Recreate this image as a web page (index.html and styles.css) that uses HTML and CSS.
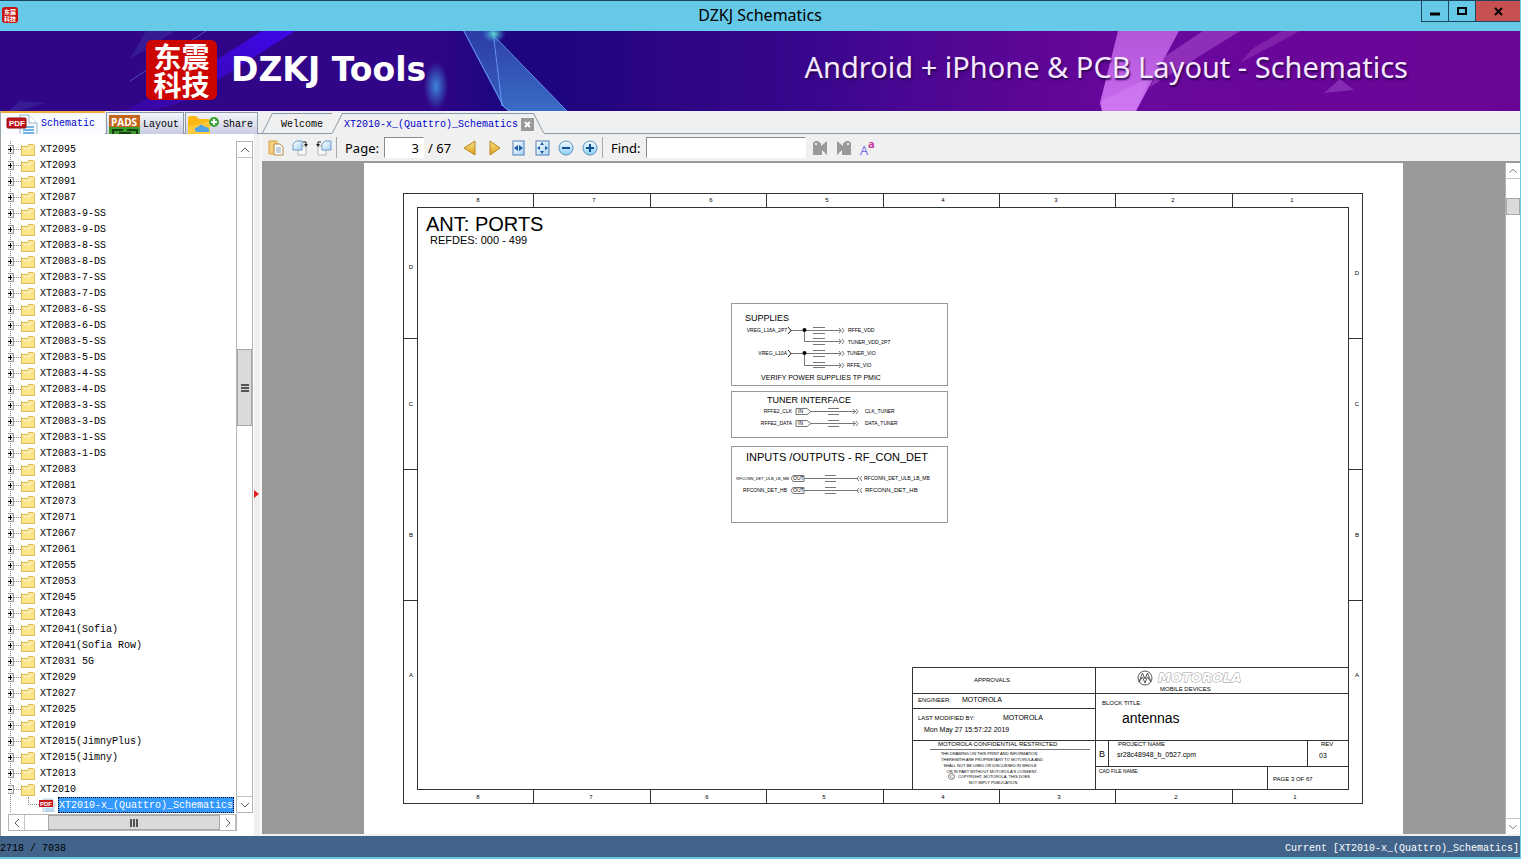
FILE: index.html
```html
<!DOCTYPE html>
<html lang="en">
<head>
	<meta charset="UTF-8">
	<title>DZKJ Schematics</title>
	<link rel="stylesheet" href="styles.css">
</head>
<body>
	<svg class="defs" aria-hidden="true">
		<symbol id="folder" viewBox="0 0 14 13">
			<path d="M.5 2.500 V12.500 H13.500 V2.500 L12.500 1.500 H7.500 L6 3.500 H1.500 L.5 2.500 Z" fill="#fbe58c" stroke="#dfb955"/>
			<path d="M2 5.500 H9 L10 3.500 H12.500" fill="none" stroke="#fff6c8"/>
		</symbol>
		<symbol id="pdf" viewBox="0 0 32 22">
			<path d="M14 2 H23 L31 10 V22 H14 Z" fill="#f2f8fd" stroke="#9fb8cc"/>
			<path d="M23 2 V10 H31" fill="#fff" stroke="#9fb8cc"/>
			<path d="M17 14 H28 M17 17 H28 M17 20 H28" stroke="#72b4e4" stroke-width="2"/>
			<rect x="1" y="5" width="19" height="10" rx="1" fill="#c5161c" stroke="#8e0c10"/>
			<text x="3" y="13" font-family="Liberation Sans" font-weight="bold" font-size="8" fill="#fff">PDF</text>
		</symbol>
		<symbol id="pdf-small" viewBox="0 0 16 14">
			<path d="M4 1 H13 L15 4 V14 H4 Z" fill="#e4f1fb" stroke="#b4cbdd"/>
			<path d="M6 11 H14 M6 13 H14" stroke="#8fc4ea"/>
			<rect y="2" width="14" height="7" fill="#c5161c"/>
			<text x="1" y="8" font-family="Liberation Sans" font-weight="bold" font-size="6" fill="#fff">PDF</text>
		</symbol>
		<symbol id="up" viewBox="0 0 16 16"><path d="M4 10 L8 6 L12 10" fill="none" stroke="#606060"/></symbol>
		<symbol id="down" viewBox="0 0 16 16"><path d="M4 6 L8 10 L12 6" fill="none" stroke="#606060"/></symbol>
		<symbol id="left" viewBox="0 0 16 16"><path d="M10 4 L6 8 L10 12" fill="none" stroke="#606060"/></symbol>
		<symbol id="right" viewBox="0 0 16 16"><path d="M6 4 L10 8 L6 12" fill="none" stroke="#606060"/></symbol>
		<linearGradient id="gold" x2="0" y2="1"><stop offset="0" stop-color="#fbe58a"/><stop offset="1" stop-color="#dd9c18"/></linearGradient>
		<linearGradient id="sky" x2="0" y2="1"><stop offset="0" stop-color="#f2fbff"/><stop offset="1" stop-color="#8bcdf4"/></linearGradient>
		<linearGradient id="paper" x2="1" y2="1"><stop offset="0" stop-color="#ffffff"/><stop offset="1" stop-color="#a8d4f4"/></linearGradient>
	</svg>

	<header class="titlebar">
		<span class="app-icon">东震<br>科技</span>
		<h1>DZKJ Schematics</h1>
		<div class="win-buttons">
			<button type="button" aria-label="Minimize"><svg width="10" height="9"><path d="M0 7 H10" stroke="#000" stroke-width="3"/></svg></button>
			<button type="button" aria-label="Maximize"><svg width="10" height="9"><rect x="1" y="1" width="8" height="6" fill="none" stroke="#000" stroke-width="2"/></svg></button>
			<button type="button" class="close" aria-label="Close"><svg width="9" height="9"><path d="M1 1 L8 8 M8 1 L1 8" stroke="#000" stroke-width="2"/></svg></button>
		</div>
	</header>

	<div class="banner">
		<svg class="banner-art" viewBox="0 0 1520 80" preserveAspectRatio="none" aria-hidden="true">
			<defs>
				<linearGradient id="bg">
					<stop offset="0" stop-color="#310587"/><stop offset=".28" stop-color="#310587"/>
					<stop offset=".33" stop-color="#1d0580"/><stop offset=".37" stop-color="#1f047f"/>
					<stop offset=".43" stop-color="#2b0583"/><stop offset=".53" stop-color="#37068c"/>
					<stop offset=".6" stop-color="#4b0793"/><stop offset=".68" stop-color="#5d0596"/>
					<stop offset=".74" stop-color="#6a079d"/><stop offset="1" stop-color="#690596"/>
				</linearGradient>
				<linearGradient id="streak" x1="1" x2="0" y2="1"><stop offset="0" stop-color="#3d08e8"/><stop offset="1" stop-color="#3806a0"/></linearGradient>
				<linearGradient id="facet" x2="0" y2="1"><stop offset="0" stop-color="#2f48b0"/><stop offset="1" stop-color="#3d78cc"/></linearGradient>
				<linearGradient id="pink" x2="0" y2="1"><stop offset="0" stop-color="#b455d8"/><stop offset="1" stop-color="#c86cf0"/></linearGradient>
				<radialGradient id="glow"><stop offset="0" stop-color="#3c86d8"/><stop offset="1" stop-color="#3c86d8" stop-opacity="0"/></radialGradient>
				<radialGradient id="spark"><stop offset="0" stop-color="#5fe0d0"/><stop offset="1" stop-color="#3c86d8" stop-opacity="0"/></radialGradient>
			</defs>
			<rect width="1520" height="80" fill="url(#bg)"/>
			<path d="M262 0 H295 L185 70 L150 80 H125 L218 28 Z" fill="url(#streak)"/>
			<path d="M146 0 H175 L130 28 Z M20 70 L45 72 L20 80 H8 Z" fill="#3f3ca8" opacity=".4"/>
			<path d="M206 0 L130 50" stroke="#5148c0"/>
			<ellipse cx="436" cy="55" rx="12" ry="24" fill="url(#glow)"/>
			<path d="M463 0 H493 L503 76 Z" fill="url(#facet)" opacity=".8"/>
			<path d="M494 5 L567 80 H508 L502 74 Z" fill="url(#facet)" opacity=".9"/>
			<path d="M464 0 L504 76 L510 80 M493 0 L502 75 M494 5 L567 80" fill="none" stroke="#6d9bff" opacity=".9"/>
			<ellipse cx="494" cy="3" rx="12" ry="9" fill="url(#spark)"/>
			<path d="M1118 0 H1179 L1136 80 H1102 L1100 72 Z" fill="url(#pink)"/>
			<path d="M1102 70 L1150 46 L1136 80 H1102 Z" fill="#d78af8" opacity=".4"/>
			<path d="M1203 0 H1240 L1150 56 L1164 26 Z" fill="#a040c4" opacity=".7"/>
			<path d="M1282 0 H1300 L1240 32 L1252 18 Z" fill="#8c2cb0" opacity=".7"/>
			<path d="M1340 48 L1354 59 L1324 62 Z" fill="#8b35b8" opacity=".8"/>
		</svg>
		<div class="banner-text">
			<div class="logo"><span>东震</span><span>科技</span></div>
			<strong>DZKJ Tools</strong>
			<span class="slogan">Android + iPhone &amp; PCB Layout - Schematics</span>
		</div>
	</div>

	<main>
		<aside>
			<nav class="side-tabs">
				<button type="button" class="active"><svg width="32" height="22"><use href="#pdf"/></svg>Schematic</button>
				<button type="button">
					<svg width="31" height="19"><rect width="31" height="19" fill="#c4651c"/><rect y="12" width="31" height="7" fill="#3a9a2c"/><path d="M4 19 V15 H14 M18 15 H28 V19 M10 18 H22" fill="none" stroke="#173f14" stroke-width="2"/><text x="2" y="11" font-family="Open Sans" font-weight="bold" font-size="10" fill="#fff">PADS</text></svg>Layout
				</button>
				<button type="button">
					<svg width="32" height="19"><path d="M0 3 Q0 1 2 1 H8 L11 4 H20 Q22 4 22 6 V19 H0 Z" fill="#fdb913"/><path d="M0 12 L22 6 V19 H0 Z" fill="#ffc93c"/><path d="M10 17 Q6 17 7 13 Q9 12 10 12 Q13 7 17 12 Q22 12 21 17 Z" fill="#4da5e8"/><circle cx="26" cy="7" r="5" fill="#3fa535"/><path d="M26 4 V10 M23 7 H29" stroke="#fff" stroke-width="2"/></svg>Share
				</button>
			</nav>
			<div class="side-body">
				<div class="tree-wrap">
					<ul class="tree" id="tree"></ul>
					<div class="vscroll">
						<button type="button" aria-label="Scroll up"><svg width="16" height="16"><use href="#up"/></svg></button>
						<div class="track"><div class="thumb side-thumb"><svg width="8" height="8"><path d="M0 1 H8 M0 4 H8 M0 7 H8" stroke="#555" stroke-width="2"/></svg></div></div>
						<button type="button" aria-label="Scroll down"><svg width="16" height="16"><use href="#down"/></svg></button>
					</div>
				</div>
				<div class="hscroll">
					<button type="button" aria-label="Scroll left"><svg width="16" height="16"><use href="#left"/></svg></button>
					<div class="track"><div class="thumb"><svg width="8" height="8"><path d="M1 0 V8 M4 0 V8 M7 0 V8" stroke="#555" stroke-width="2"/></svg></div></div>
					<button type="button" aria-label="Scroll right"><svg width="16" height="16"><use href="#right"/></svg></button>
				</div>
			</div>
			<div class="splitter"><svg width="5" height="8"><path d="M0 0 L5 4 L0 8 Z" fill="#e02020"/></svg></div>
		</aside>

		<section class="viewer">
			<nav class="doc-tabs">
				<button type="button" class="doc-tab welcome">Welcome</button>
				<button type="button" class="doc-tab active">XT2010-x_(Quattro)_Schematics
					<svg width="13" height="13"><rect width="13" height="13" fill="#9a9a9a"/><path d="M4 4 L9 9 M9 4 L4 9" stroke="#fff" stroke-width="2"/></svg>
				</button>
				<span class="tab-rest"></span>
			</nav>
			<div class="toolbar">
				<button type="button" aria-label="Open"><svg width="16" height="16"><path d="M1 1 H9 V14 H1 Z" fill="#f3cf82" stroke="#d9a441"/><path d="M6 4 H12 L15 7 V15 H6 Z" fill="#f9fbfd" stroke="#b98a3a"/><path d="M8 8 H13 M8 10 H13 M8 12 H13" stroke="#8ea6bd"/></svg></button>
				<button type="button" aria-label="Rotate right"><svg width="16" height="16"><path d="M6 6 H14 V15 H6 Z" fill="#f6f6f6" stroke="#b5b5b5"/><path d="M1 4 L4 1 H10 V10 H1 Z" fill="url(#paper)" stroke="#6f9cc8"/><path d="M11 2 H14 V5" fill="none" stroke="#222"/><path d="M12 4 H16 L14 7 Z" fill="#222"/></svg></button>
				<button type="button" aria-label="Rotate left"><svg width="16" height="16"><path d="M2 6 H10 V15 H2 Z" fill="#f6f6f6" stroke="#b5b5b5"/><path d="M6 4 L9 1 H15 V10 H6 Z" fill="url(#paper)" stroke="#6f9cc8"/><path d="M5 2 H2 V5" fill="none" stroke="#222"/><path d="M0 4 H4 L2 7 Z" fill="#222"/></svg></button>
				<span class="sep"></span>
				<label for="page">Page:</label>
				<input class="page-input" id="page" type="text" value="3">
				<span class="total">/ 67</span>
				<button type="button" aria-label="Previous page"><svg width="16" height="16"><path d="M2 8 L13 1 V15 Z" fill="url(#gold)" stroke="#b58820"/></svg></button>
				<button type="button" aria-label="Next page"><svg width="16" height="16"><path d="M4 1 V15 L14 8 Z" fill="url(#gold)" stroke="#b58820"/></svg></button>
				<button type="button" aria-label="Fit width"><svg width="16" height="16"><rect x="3" y="1" width="11" height="14" fill="url(#paper)" stroke="#4f7fb5"/><path d="M4 8 L8 5 V11 Z M13 8 L9 5 V11 Z" fill="#1c5aa6"/></svg></button>
				<button type="button" aria-label="Fit page"><svg width="16" height="16"><rect x="2" y="1" width="13" height="14" fill="url(#paper)" stroke="#4f7fb5"/><path d="M8 2 L10 5 H6 Z M8 14 L10 11 H6 Z M3 8 L6 6 V10 Z M14 8 L11 6 V10 Z" fill="#1c5aa6"/></svg></button>
				<button type="button" aria-label="Zoom out"><svg width="16" height="16"><circle cx="8" cy="8" r="7" fill="url(#sky)" stroke="#5b93bf"/><path d="M4 8 H12" stroke="#104e96" stroke-width="2"/></svg></button>
				<button type="button" aria-label="Zoom in"><svg width="16" height="16"><circle cx="8" cy="8" r="7" fill="url(#sky)" stroke="#5b93bf"/><path d="M4 8 H12 M8 4 V12" stroke="#104e96" stroke-width="2"/></svg></button>
				<span class="sep"></span>
				<label for="find">Find:</label>
				<input class="find-input" id="find" type="text">
				<button type="button" aria-label="Find previous"><svg width="16" height="16"><path d="M1 3 L3 1 H6 L8 3 H9 V6 L15 1 V15 L10 10 V15 H1 Z" fill="#999"/><path d="M3 4 H5" stroke="#eee" stroke-width="2"/></svg></button>
				<button type="button" aria-label="Find next"><svg width="16" height="16"><path d="M15 3 L13 1 H10 L8 3 H7 V6 L1 1 V15 L6 10 V15 H15 Z" fill="#999"/><path d="M11 4 H13" stroke="#eee" stroke-width="2"/></svg></button>
				<button type="button" aria-label="Match case"><svg class="case" width="18" height="20"><text x="1" y="17" font-family="Open Sans" font-size="13" fill="#7a68e8">A</text><text x="9" y="10" font-family="Open Sans" font-size="11" font-weight="bold" fill="#c8329a">a</text></svg></button>
			</div>

			<div class="canvas">
				<div class="page-area">
					<svg class="sheet" viewBox="364 163 1039 671" role="img" aria-label="Antenna ports, page 3">
						<rect x="364" y="163" width="1039" height="671" fill="#fff"/>
						<!-- frame -->
						<g class="frame">
							<rect x="403.500" y="193.500" width="959" height="610"/>
							<rect x="417.500" y="207.500" width="931" height="582"/>
							<path d="M533.500 193 V208 M650.500 193 V208 M766.500 193 V208 M883.500 193 V208 M999.500 193 V208 M1115.500 193 V208 M1232.500 193 V208"/>
							<path d="M533.500 790 V804 M650.500 790 V804 M766.500 790 V804 M883.500 790 V804 M999.500 790 V804 M1115.500 790 V804 M1232.500 790 V804"/>
							<path d="M403 338.500 H418 M403 469.500 H418 M403 600.500 H418 M1349 338.500 H1363 M1349 469.500 H1363 M1349 600.500 H1363"/>
						</g>
						<g class="t6 mid">
							<text x="478" y="202">8</text><text x="594" y="202">7</text><text x="711" y="202">6</text><text x="827" y="202">5</text><text x="943" y="202">4</text><text x="1056" y="202">3</text><text x="1173" y="202">2</text><text x="1292" y="202">1</text>
							<text x="478" y="799">8</text><text x="591" y="799">7</text><text x="707" y="799">6</text><text x="824" y="799">5</text><text x="943" y="799">4</text><text x="1059" y="799">3</text><text x="1176" y="799">2</text><text x="1295" y="799">1</text>
							<text x="411" y="269">D</text><text x="411" y="406">C</text><text x="411" y="537">B</text><text x="411" y="677">A</text>
							<text x="1357" y="275">D</text><text x="1357" y="406">C</text><text x="1357" y="537">B</text><text x="1357" y="677">A</text>
						</g>
						<text x="426" y="231" class="t20">ANT: PORTS</text>
						<text x="430" y="244" class="t11">REFDES: 000 - 499</text>

						<!-- supplies -->
						<g class="box"><rect x="731.500" y="303.500" width="216" height="82"/><rect x="731.500" y="391.500" width="216" height="46"/><rect x="731.500" y="446.500" width="216" height="76"/></g>
						<text x="745" y="321" class="t9">SUPPLIES</text>
						<g class="wire">
							<path d="M790 330.500 H841 M804.500 330 V341.500 H841 M790 353.500 H841 M804.500 353 V365.500 H841"/>
							<path d="M813 327.500 H825 M813 333.500 H825 M813 338.500 H825 M813 344.500 H825 M813 350.500 H825 M813 356.500 H825 M813 362.500 H825 M813 367.500 H825"/>
							<path d="M839 328 L841 330.500 L839 333 M842 328 L844 330.500 L842 333 M839 339 L841 341.500 L839 344 M842 339 L844 341.500 L842 344 M839 351 L841 353.500 L839 356 M842 351 L844 353.500 L842 356 M839 363 L841 365.500 L839 368 M842 363 L844 365.500 L842 368"/>
						</g>
						<path class="port" d="M788 327 L791 330.500 L788 334 M788 350 L791 353.500 L788 357"/>
						<circle cx="804.500" cy="330" r="2"/><circle cx="804.500" cy="353" r="2"/>
						<g class="t5">
							<text x="787" y="332" class="end">VREG_L16A_2P7</text><text x="787" y="355" class="end">VREG_L10A</text>
							<text x="848" y="332">RFFE_VDD</text><text x="848" y="344">TUNER_VDD_2P7</text><text x="847" y="355">TUNER_VIO</text><text x="847" y="367">RFFE_VIO</text>
						</g>
						<text x="821" y="380" class="t7 mid">VERIFY POWER SUPPLIES TP PMIC</text>

						<!-- tuner -->
						<text x="767" y="403" class="t9">TUNER INTERFACE</text>
						<g class="wire">
							<path d="M796 408.500 H807 L811 411.500 L807 414.500 H796 Z M796 420.500 H807 L811 423.500 L807 426.500 H796 Z"/>
							<path d="M811 411.500 H856 M811 423.500 H856 M828 408.500 H839 M828 414.500 H839 M828 420.500 H839 M828 426.500 H839"/>
							<path d="M853 409 L855 411.500 L853 414 M856 409 L858 411.500 L856 414 M853 421 L855 423.500 L853 426 M856 421 L858 423.500 L856 426"/>
						</g>
						<g class="t5">
							<text x="792" y="413" class="end">RFFE2_CLK</text><text x="792" y="425" class="end">RFFE2_DATA</text>
							<text x="798" y="413">IN</text><text x="798" y="425">IN</text>
							<text x="865" y="413">CLK_TUNER</text><text x="865" y="425">DATA_TUNER</text>
						</g>

						<!-- inputs / outputs -->
						<text x="837" y="461" class="t11 mid">INPUTS /OUTPUTS - RF_CON_DET</text>
						<g class="wire">
							<path d="M804 475.500 H793 L791 478.500 L793 481.500 H804 Z M804 487.500 H793 L791 490.500 L793 493.500 H804 Z"/>
							<path d="M804 478.500 H858 M804 490.500 H858 M825 475.500 H836 M825 481.500 H836 M825 487.500 H836 M825 493.500 H836"/>
							<path d="M859 476 L857 478.500 L859 481 M862 476 L860 478.500 L862 481 M859 488 L857 490.500 L859 493 M862 488 L860 490.500 L862 493"/>
						</g>
						<g class="t4"><text x="789" y="480" class="end">RFCONN_DET_ULB_LB_MB</text></g>
						<g class="t5">
							<text x="787" y="492" class="end">RFCONN_DET_HB</text>
							<text x="793" y="480">OUT</text><text x="793" y="492">OUT</text>
							<text x="864" y="480">RFCONN_DET_ULB_LB_MB</text>
						</g>
						<text x="865" y="492" class="t6">RFCONN_DET_HB</text>

						<!-- title block -->
						<g class="frame">
							<path d="M912.500 790 V667.500 H1348 M912 693.500 H1348 M912 708.500 H1095 M912 740.500 H1348 M1095.500 667 V790 M1095 766.500 H1348 M1108.500 740 V766 M1307.500 740 V766 M1267.500 766 V790"/>
						</g>
						<path class="wire" d="M930 749.500 H1090"/>
						<g class="t6">
							<text x="974" y="682">APPROVALS</text>
							<text x="918" y="702">ENGINEER:</text>
							<text x="918" y="720">LAST MODIFIED BY:</text>
							<text x="938" y="746">MOTOROLA CONFIDENTIAL RESTRICTED</text>
							<text x="1160" y="691">MOBILE DEVICES</text>
							<text x="1102" y="705">BLOCK TITLE:</text>
							<text x="1118" y="746">PROJECT NAME</text>
							<text x="1321" y="746">REV</text>
							<text x="1273" y="781">PAGE 3 OF 67</text>
						</g>
						<g class="t7">
							<text x="962" y="702">MOTOROLA</text>
							<text x="1003" y="720">MOTOROLA</text>
							<text x="924" y="732">Mon May 27 15:57:22 2019</text>
							<text x="1117" y="757">sr28c48948_b_0527.cpm</text>
							<text x="1319" y="758">03</text>
						</g>
						<text x="1099" y="757" class="t9">B</text>
						<text x="1099" y="773" class="t5">CAD FILE NAME:</text>
						<text x="1122" y="723" class="t14">antennas</text>
						<g class="t4 mid">
							<text x="989" y="755">THE DRAWING ON THIS PRINT AND INFORMATION</text>
							<text x="992" y="761">THEREWITH ARE PROPRIETARY TO MOTOROLA AND</text>
							<text x="990" y="767">SHALL NOT BE USED OR DISCUSSED IN WHOLE</text>
							<text x="992" y="773">OR IN PART WITHOUT MOTOROLA'S CONSENT.</text>
							<text x="994" y="778">COPYRIGHT, MOTOROLA. THIS DOES</text>
							<text x="993" y="784">NOT IMPLY PUBLICATION</text>
						</g>
						<circle cx="951.500" cy="776.500" r="3" class="wire"/><text x="950" y="778" class="t4">C</text>
						<circle cx="1145" cy="678" r="7" class="ring"/>
						<path d="M1139 682 L1142.500 673 L1145 679 L1147.500 673 L1151 682 L1147.500 677 L1145 683 L1142.500 677 Z" class="ring"/>
						<text x="1158" y="682" class="brand">MOTOROLA</text>
					</svg>
				</div>
				<div class="vscroll">
					<button type="button" aria-label="Page up"><svg width="14" height="14"><use href="#up"/></svg></button>
					<div class="track"><div class="thumb page-thumb"></div></div>
					<button type="button" aria-label="Page down"><svg width="14" height="14"><use href="#down"/></svg></button>
				</div>
			</div>
		</section>
	</main>

	<footer>
		<span>2718 / 7038</span>
		<span class="current">Current [XT2010-x_(Quattro)_Schematics]</span>
	</footer>
	<script src="tree.js"></script>
</body>
</html>
```
FILE: styles.css
```css
* {
	box-sizing: border-box;
}

body {
	margin: 0;
	height: 100vh;
	display: flex;
	flex-direction: column;
	overflow: hidden;
	background: #f0f0f0;
	border-right: 1px solid #66c9e8;
	border-bottom: 2px solid #66c9e8;
	font-family: "Liberation Mono", "Noto Sans CJK SC", monospace;
	font-size: 10px;
	color: #000;
}

button {
	margin: 0;
	padding: 0;
	border: none;
	background: none;
	font: inherit;
	color: inherit;
}

svg {
	display: block;
	flex: none;
}

.defs {
	position: absolute;
	width: 0;
	height: 0;
}

/* title bar */
.titlebar {
	display: grid;
	grid-template-columns: 1fr auto 1fr;
	height: 31px;
	flex: none;
	border-top: 1px solid #1d4560;
	background: #66c9e8;
}

.app-icon {
	width: 16px;
	height: 16px;
	margin: 6px 2px;
	padding-top: 1px;
	border-radius: 3px;
	background: #c8100c;
	color: #fff;
	font: bold 6px/7px "Noto Sans CJK SC", sans-serif;
	text-align: center;
}

.titlebar h1 {
	margin: 0;
	font: 16px/29px "Noto Sans", sans-serif;
}

.win-buttons {
	display: flex;
	justify-content: flex-end;
	height: 21px;
}

.win-buttons button {
	display: flex;
	align-items: center;
	justify-content: center;
	width: 27px;
	border: 1px solid #1d4560;
	border-width: 0 0 1px 1px;
}

.win-buttons .close {
	width: 45px;
	background: #c75050;
}

/* banner */
.banner {
	display: grid;
	height: 80px;
	flex: none;
}

.banner-art, .banner-text {
	grid-area: 1 / 1;
	width: 100%;
	height: 80px;
}

.banner-text {
	display: flex;
	align-items: center;
	padding: 0 112px 2px 146px;
	z-index: 1;
	color: #fff;
}

.logo {
	display: flex;
	flex-direction: column;
	align-items: center;
	justify-content: center;
	width: 71px;
	height: 60px;
	border-radius: 6px;
	background: #cd0500;
	font: bold 28px/28px "Noto Sans CJK SC", sans-serif;
}

.banner strong {
	margin-left: 14px;
	font: bold 33px/40px "DejaVu Sans", sans-serif;
}

.slogan {
	margin: 0 0 6px auto;
	font: 29px/40px "Noto Sans", sans-serif;
	color: #f6e8ff;
	text-shadow: 1px 2px 2px #2a0450;
	white-space: nowrap;
}

/* main */
main {
	display: flex;
	flex: 1;
	min-height: 0;
}

aside {
	display: grid;
	grid-template: 23px 1fr / 253px 8px;
	flex: none;
	border-left: 1px solid #9aa5ad;
}

.side-tabs {
	grid-column: 1 / 3;
	display: flex;
	gap: 1px;
	border-bottom: 1px solid #8a9aa8;
}

.side-tabs button {
	display: flex;
	align-items: center;
	gap: 3px;
	height: 22px;
	margin-top: 1px;
	padding: 2px 4px 0 2px;
	border: 1px solid #8a9aa8;
	border-bottom: none;
	background: linear-gradient(#f4f5fa, #c9cde2);
}

.side-tabs .active {
	width: 104px;
	height: 23px;
	margin-top: 0;
	padding: 0 0 0 5px;
	border: none;
	border-top: 2px solid #f5a83c;
	background: #fbfcff;
	color: #0000c8;
}

.side-body {
	display: flex;
	flex-direction: column;
	padding: 7px 1px 5px 7px;
	background: #fff;
}

.tree-wrap {
	display: flex;
	flex: 1;
	min-height: 0;
}

.tree {
	flex: 1;
	min-width: 0;
	margin: 0;
	padding: 0;
	list-style: none;
	overflow: hidden;
	background: repeating-linear-gradient(#888 0 1px, #fff 1px 2px) 2px 0 / 1px 100% no-repeat;
}

.tree li {
	display: flex;
	align-items: center;
	height: 16px;
	line-height: 14px;
}

.tree a {
	margin-left: 5px;
	padding-top: 2px;
	color: #000;
	text-decoration: none;
	white-space: nowrap;
}

.toggle {
	position: relative;
	width: 6px;
	height: 9px;
	border: 1px solid #999;
	border-left: none;
	background: #eee;
}

.toggle::before, .toggle.closed::after {
	content: "";
	position: absolute;
	left: 0;
	top: 3px;
	width: 4px;
	height: 1px;
	background: #000;
}

.toggle.closed::after {
	left: 2px;
	top: 1px;
	width: 1px;
	height: 5px;
}

.dots {
	width: 7px;
	border-top: 1px dotted #888;
}

.tree .leaf .dots {
	width: 11px;
	height: 8px;
	margin: 0 0 8px 20px;
	border-top: none;
	border-left: 1px dotted #888;
	border-bottom: 1px dotted #888;
}

.tree .leaf a {
	margin-left: 3px;
	padding: 2px 1px 0;
	outline: 1px dotted #000;
	outline-offset: -1px;
	background: #3399ff;
	color: #fff;
}

/* scrollbars */
.vscroll, .hscroll {
	display: flex;
	flex: none;
	background: #fff;
	border: 1px solid #b4b4b4;
}

.vscroll {
	flex-direction: column;
	width: 17px;
}

.hscroll {
	height: 17px;
	margin: 1px 16px 0 0;
}

.vscroll button {
	height: 16px;
	border-bottom: 1px solid #c4c4c4;
}

.vscroll button:last-child {
	border-top: 1px solid #c4c4c4;
	border-bottom: none;
}

.hscroll button {
	width: 16px;
	border-right: 1px solid #c4c4c4;
}

.track {
	position: relative;
	flex: 1;
}

.thumb {
	position: absolute;
	display: flex;
	align-items: center;
	justify-content: center;
	left: 12%;
	top: 0;
	width: 88%;
	height: 100%;
	border: 1px solid #a8a8a8;
	background: #dadada;
}

.side-thumb {
	left: 0;
	top: 30%;
	width: 100%;
	height: 12%;
}

.page-thumb {
	left: 0;
	top: 3%;
	width: 100%;
	height: 17px;
}

.splitter {
	display: flex;
	align-items: center;
	background: #f0f0f0;
	border-right: 2px solid #f8f8f8;
}

.splitter svg {
	margin-top: 18px;
}

/* viewer */
.viewer {
	display: flex;
	flex-direction: column;
	flex: 1;
	min-width: 0;
}

.doc-tabs {
	display: flex;
	height: 23px;
	padding-top: 2px;
	flex: none;
}

.doc-tab {
	position: relative;
	display: flex;
	align-items: center;
	gap: 3px;
	padding: 2px 10px 0 12px;
	border-bottom: 1px solid #8a9aa8;
	white-space: nowrap;
}

.doc-tab::before, .doc-tab::after {
	content: "";
	position: absolute;
	top: 0;
	bottom: 0;
	left: 5px;
	width: 50%;
	border: 1px solid #8a9aa8;
	border-width: 1px 0 0 1px;
	transform: skewX(-27deg);
}

.doc-tab::after {
	left: auto;
	right: 5px;
	border-width: 1px 1px 0 0;
	transform: skewX(27deg);
}

.doc-tab.welcome {
	width: 70px;
	padding-left: 19px;
}

.doc-tab.welcome::after {
	right: 0;
	border-right: none;
	transform: none;
}

.doc-tab.active {
	border-bottom-color: transparent;
	color: #0000c8;
}

.tab-rest {
	flex: 1;
	border-bottom: 1px solid #8a9aa8;
}

.toolbar {
	display: flex;
	align-items: center;
	height: 29px;
	flex: none;
	padding-left: 2px;
	border-bottom: 2px solid #999;
	font: 13px/18px "Noto Sans", sans-serif;
}

.toolbar button {
	display: flex;
	justify-content: center;
	width: 24px;
}

.toolbar label {
	margin: 0 5px 0 8px;
}

.sep {
	width: 1px;
	height: 21px;
	background: #a8a8a8;
}

.toolbar input {
	height: 21px;
	padding: 0 4px;
	border: 1px solid #fff;
	border-top-color: #8a8a8a;
	border-left-color: #8a8a8a;
	background: #fff;
	font: inherit;
}

.page-input {
	width: 40px;
	text-align: right;
}

.total {
	width: 34px;
	padding-left: 4px;
}

.find-input {
	width: 160px;
	margin-right: 2px;
}

.case {
	overflow: visible;
}

.canvas {
	display: flex;
	flex: 1;
	min-height: 0;
	border-bottom: 2px solid #f0f0f0;
}

.page-area {
	display: flex;
	justify-content: center;
	flex: 1;
	min-width: 0;
	background: #999;
}

.sheet {
	height: 100%;
	max-width: 100%;
	font-family: "Liberation Sans", Arial, sans-serif;
}

.canvas .vscroll {
	width: 15px;
	border-width: 0 0 0 1px;
}

.frame {
	fill: none;
	stroke: #333;
}

.box {
	fill: none;
	stroke: #999;
}

.wire, .ring {
	fill: none;
	stroke: #777;
}

.ring {
	stroke: #555;
}

.port {
	fill: none;
	stroke: #222;
}

.t4 { font-size: 4px; }
.t5 { font-size: 5px; }
.t6 { font-size: 6px; }
.t7 { font-size: 7px; }
.t9 { font-size: 9px; }
.t11 { font-size: 11px; }
.t14 { font-size: 14px; }
.t20 { font-size: 20px; }
.mid { text-anchor: middle; }
.end { text-anchor: end; }

.brand {
	font: italic bold 13px "DejaVu Sans", sans-serif;
	fill: #fff;
	stroke: #999;
	paint-order: stroke;
}

/* status bar */
footer {
	display: flex;
	justify-content: space-between;
	height: 21px;
	flex: none;
	padding: 4px 1px 0 0;
	line-height: 18px;
	background: #42648a;
}

.current {
	color: #fff;
}
```
FILE: tree.js
```
const folders = [
	'XT2095', 'XT2093', 'XT2091', 'XT2087',
	'XT2083-9-SS', 'XT2083-9-DS', 'XT2083-8-SS', 'XT2083-8-DS',
	'XT2083-7-SS', 'XT2083-7-DS', 'XT2083-6-SS', 'XT2083-6-DS',
	'XT2083-5-SS', 'XT2083-5-DS', 'XT2083-4-SS', 'XT2083-4-DS',
	'XT2083-3-SS', 'XT2083-3-DS', 'XT2083-1-SS', 'XT2083-1-DS',
	'XT2083', 'XT2081', 'XT2073', 'XT2071', 'XT2067', 'XT2061',
	'XT2055', 'XT2053', 'XT2045', 'XT2043', 'XT2041(Sofia)',
	'XT2041(Sofia Row)', 'XT2031 5G', 'XT2029', 'XT2027', 'XT2025',
	'XT2019', 'XT2015(JimnyPlus)', 'XT2015(Jimny)', 'XT2013', 'XT2010'
];

let rows = '';
for (const name of folders) {
	const state = name === 'XT2010' ? 'open' : 'closed';
	rows += `<li><button type="button" class="toggle ${state}" aria-label="Toggle ${name}"></button><span class="dots"></span>` +
		`<svg width="14" height="13"><use href="#folder"/></svg><a href="#">${name}</a></li>`;
}
rows += '<li class="leaf"><span class="dots"></span><svg width="16" height="14"><use href="#pdf-small"/></svg>' +
	'<a href="#">XT2010-x_(Quattro)_Schematics</a></li>';
document.getElementById('tree').innerHTML = rows;
```
